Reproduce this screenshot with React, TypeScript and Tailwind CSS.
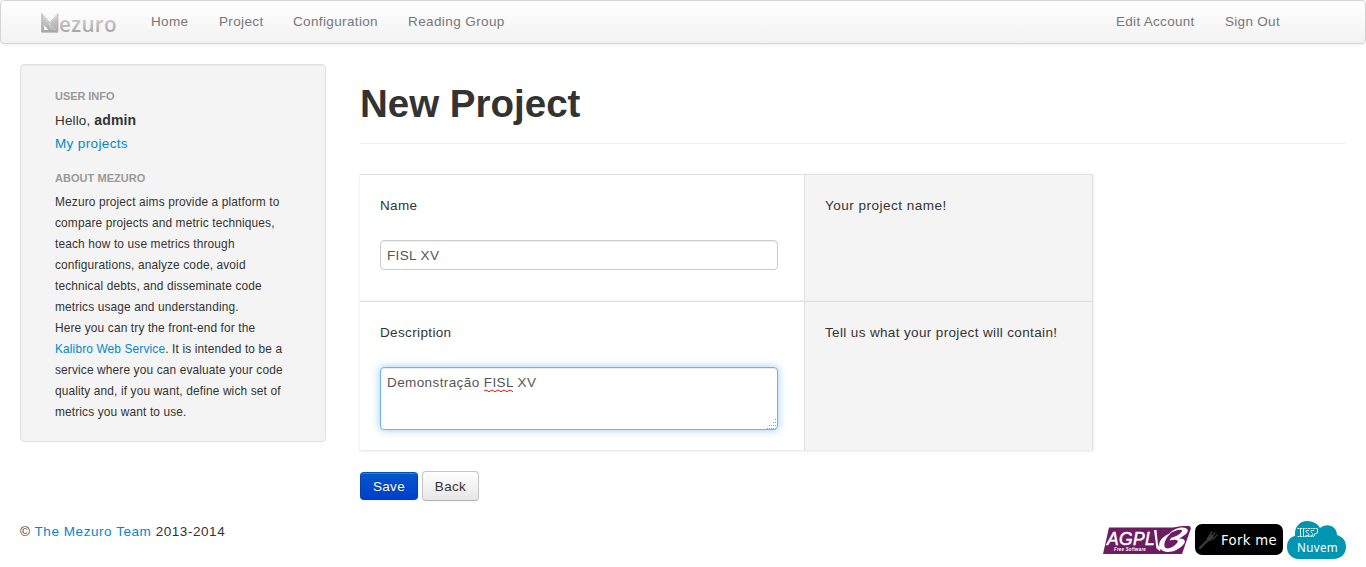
import React from "react";

function MezuroLogo() {
  return (
    <svg width="80" height="30" viewBox="0 -2 80 30" className="block">
      <defs>
        <linearGradient id="logo" x1="0" y1="0" x2="0" y2="22" gradientUnits="userSpaceOnUse">
          <stop offset="0" stopColor="#dcdcdc" />
          <stop offset="1" stopColor="#a2a2a2" />
        </linearGradient>
      </defs>
      <path fillRule="evenodd" d="M0.3 0.5 L8.7 10 L17.3 0.5 V20.5 H0.3Z M3 13 V18 H7.5Z" fill="url(#logo)" />
      <path d="M0.8 1.5 V20 H16.8 V1.5" fill="none" stroke="#a8a8a8" strokeWidth="0.9" strokeDasharray="1.2 1" />
      <path d="M2.5 5.5 L14.5 18 M16 3 L8 12.5 L11 18" fill="none" stroke="#ededed" strokeWidth="0.8" strokeDasharray="1.5 0.8" />
      <text x="18" y="20" textLength="58" lengthAdjust="spacingAndGlyphs" fontFamily="'Open Sans', sans-serif" fontWeight="600" fontSize="21.5" fill="url(#logo)">ezuro</text>
    </svg>
  );
}

function AgplBadge() {
  return (
    <svg width="89" height="30" viewBox="0 0 89 30" className="block">
      <path d="M7 2.5 H71 L80 1 H87 Q90 2 88 6 L80 29 H1Z" fill="#6d1c63" />
      <text x="5" y="20" textLength="48" lengthAdjust="spacingAndGlyphs" fontFamily="'Liberation Sans', sans-serif" fontSize="18" fontStyle="italic" fill="#fff" stroke="#fff" strokeWidth="0.5">AGPL</text>
      <text x="12" y="26.2" textLength="32" lengthAdjust="spacingAndGlyphs" fontFamily="'Liberation Sans', sans-serif" fontSize="5" fontStyle="italic" fontWeight="700" fill="#fff">Free Software</text>
      <path d="M52 5 H54.5 L56 20 L59 23 L58 26 L54.5 23.5Z" fill="#fff" />
      <path d="M69 8 C60 11 55 18 58 23 C62 30 75 27 81 20 C85 16 82 13 77 13.5 C84 10 88 6 84.5 3.5 C80 1 71 4 67 9 C72 5.5 79 3.5 80 5.5 C80.5 8 74 11.5 69 13 L67.5 15.5 C72 14 78 14.5 75 18 C71 23 64 25.5 62.5 21.5 C61.5 17 65 11.5 69 8Z" fill="#fff" />
    </svg>
  );
}

function ForkBadge() {
  return (
    <svg width="88" height="31" viewBox="0 0 88 31" className="block">
      <rect width="88" height="31" rx="7" fill="#000" />
      <g stroke="#3b3b3b" fill="none" strokeLinecap="round">
        <path d="M5 24 L14 15" strokeWidth="2.4" />
        <path d="M14 15 L16 13" strokeWidth="4.5" />
        <path d="M14 12 L17 8 M16 13 L20 9 M18 15 L22 11" strokeWidth="1.3" />
      </g>
      <text x="26" y="20.5" textLength="56" lengthAdjust="spacingAndGlyphs" fontFamily="'DejaVu Sans', sans-serif" fontSize="13.5" fill="#fff">Fork me</text>
    </svg>
  );
}

function CloudBadge() {
  return (
    <svg width="59" height="38" viewBox="0 0 59 38" className="block">
      <path d="M12 38 C4 38 0 32 0 26 C0 20 3 16 8 15 C7 6 13 0 20 0 C26 0 31 3 33 7 C41 1 50 6 50 14 C56 16 59 20 59 26 C59 33 54 38 46 38Z" fill="#0095b0" />
      <g fill="none" stroke="#fff" strokeWidth="0.9">
        <path d="M10.5 7.5 H30.5 M10.5 15.5 H27" strokeDasharray="2 0.6" />
        <path d="M13.5 8 V15 M16.5 8 V15 M30.5 8 V12 L27.5 13 V15" />
        <path d="M22 9.5 H19 V11 L22 13 V14.5 H18.5 M27 9.5 H24 V11 L26 13 V14.5 H23.5" strokeWidth="0.7" />
      </g>
      <text x="10" y="31" textLength="41" lengthAdjust="spacingAndGlyphs" fontFamily="'Noto Sans', sans-serif" fontSize="12.5" fill="#fff">Nuvem</text>
    </svg>
  );
}

export default function App() {
  return (
    <div className="h-[567px] w-[1366px] overflow-hidden bg-white font-['Liberation_Sans',Arial,sans-serif] text-[13.5px] leading-5 text-[#333] tracking-[0.36px]">
      <header className="flex h-11 items-center rounded border border-[#d4d4d4] bg-linear-to-b from-white to-[#f2f2f2] pr-[85px] pl-10 text-[#777] shadow-[0_1px_4px_rgba(0,0,0,0.065)]">
        <a href="#" className="mt-1.5 w-[110px]"><MezuroLogo /></a>
        <nav className="flex flex-1 items-center">
          <a href="#" className="w-[68px] whitespace-nowrap">Home</a>
          <a href="#" className="w-[74px] whitespace-nowrap">Project</a>
          <a href="#" className="w-[115px] whitespace-nowrap">Configuration</a>
          <a href="#" className="whitespace-nowrap tracking-[0.4px]">Reading Group</a>
          <a href="#" className="ml-auto w-[109px] whitespace-nowrap tracking-[0.3px]">Edit Account</a>
          <a href="#" className="w-[55px] whitespace-nowrap tracking-[0.3px]">Sign Out</a>
        </nav>
      </header>

      <div className="flex gap-[34px] px-5 pt-5">
        <aside className="h-[378px] w-[306px] shrink-0 rounded border border-[#e1e1e1] bg-[#f4f4f4] pt-[21px] pl-[34px] shadow-[inset_0_1px_1px_rgba(0,0,0,0.05)]">
          <h2 className="text-[11px] font-bold tracking-[-0.05px] text-[#999]">USER INFO</h2>
          <p className="mt-1 tracking-[0.15px]">Hello, <strong className="text-sm">admin</strong></p>
          <p className="mt-[3px]"><a href="#" className="text-[#0088cc]">My projects</a></p>
          <h2 className="mt-3.5 text-[11px] font-bold tracking-[0.05px] text-[#999]">ABOUT MEZURO</h2>
          <p className="mt-1 text-[11.9px] leading-[21px] tracking-[0.14px] whitespace-nowrap">
            Mezuro project aims provide a platform to<br />
            compare projects and metric techniques,<br />
            teach how to use metrics through<br />
            configurations, analyze code, avoid<br />
            technical debts, and disseminate code<br />
            metrics usage and understanding.<br />
            Here you can try the front-end for the<br />
            <a href="#" className="text-[#0088cc]">Kalibro Web Service</a>. It is intended to be a<br />
            service where you can evaluate your code<br />
            quality and, if you want, define wich set of<br />
            metrics you want to use.
          </p>
        </aside>

        <main className="flex-1">
          <div className="h-20 border-b border-[#eee] pt-5">
            <h1 className="text-[38.5px] leading-10 font-bold tracking-normal">New Project</h1>
          </div>
          <form>
            <div className="mt-[30px] w-[733px] shadow-[0_1px_3px_rgba(0,0,0,0.12)]">
              <div className="flex h-[127px] border-t border-r border-[#e0e0e0]">
                <div className="w-[444px] border-b border-[#f0f0f0] px-5 pt-[21px]">
                  <label htmlFor="name" className="block">Name</label>
                  <input id="name" defaultValue="FISL XV" className="mt-6 block h-[30px] w-[398px] rounded border border-[#ccc] bg-white px-1.5 text-[#555] shadow-[inset_0_1px_1px_rgba(0,0,0,0.075)] tracking-[0.36px] outline-none" />
                </div>
                <div className="flex-1 border-b border-l border-b-[#efefef] border-l-[#e0e0e0] bg-[#f4f4f4] px-5 pt-[21px] tracking-[0.5px]">Your project name!</div>
              </div>
              <div className="flex h-[149px] border-t border-r border-[#e0e0e0]">
                <div className="w-[444px] px-5 pt-[21px]">
                  <label htmlFor="description" className="block">Description</label>
                  <div className="relative mt-6 h-[63px] w-[398px]">
                    <textarea id="description" spellCheck={false} defaultValue="Demonstração FISL XV" className="block h-[63px] w-[398px] resize-none rounded border border-[#6db5ed] bg-white px-1.5 py-[5px] leading-5 tracking-[0.4px] text-[#555] shadow-[inset_0_1px_1px_rgba(0,0,0,0.075),0_0_8px_rgba(82,168,236,0.6)] outline-none" />
                    <svg className="absolute top-[22px] left-[104px]" width="30" height="4" viewBox="0 0 30 4">
                      <path d="M0 2 L2 1 L5 2.7 L8 1 L11 2.7 L14 1 L17 2.7 L20 1 L23 2.7 L26 1 L29 2.7" fill="none" stroke="#e51818" />
                    </svg>
                    <svg className="absolute right-px bottom-px" width="10" height="10" viewBox="0 0 10 10">
                      <path d="M8.5 0 V10 M6.5 3 V10 M4.5 6 V10 M2.5 6 V10 M0.5 9 V10" stroke="#999" strokeDasharray="1 2" />
                    </svg>
                  </div>
                </div>
                <div className="flex-1 border-l border-[#e0e0e0] bg-[#f4f4f4] px-5 pt-[21px] tracking-[0.36px]">Tell us what your project will contain!</div>
              </div>
            </div>
            <div className="mt-[21px] flex items-center gap-1">
              <button type="button" className="h-7 w-[58px] rounded border border-[#0044aa] border-t-[#0055bb] bg-linear-to-b from-[#0058cc] to-[#003dcc] pt-px text-white shadow-[inset_0_1px_0_rgba(255,255,255,0.2),0_1px_2px_rgba(0,0,0,0.05)] [text-shadow:0_-1px_0_rgba(0,0,0,0.25)]">Save</button>
              <button type="button" className="h-[30px] w-[57px] rounded border border-[#c5c5c5] border-b-[#b3b3b3] bg-linear-to-b from-white to-[#e6e6e6] pt-px shadow-[inset_0_1px_0_rgba(255,255,255,0.2),0_1px_2px_rgba(0,0,0,0.05)]">Back</button>
            </div>
          </form>
        </main>
      </div>

      <footer className="mt-5 flex justify-between px-5">
        <p className="pt-px tracking-[0.55px]">© <a href="#" className="text-[#0088cc]">The Mezuro Team</a> 2013-2014</p>
        <div className="flex items-start gap-1">
          <a href="#" className="mt-1"><AgplBadge /></a>
          <a href="#" className="mt-[3px]"><ForkBadge /></a>
          <a href="#"><CloudBadge /></a>
        </div>
      </footer>
    </div>
  );
}
